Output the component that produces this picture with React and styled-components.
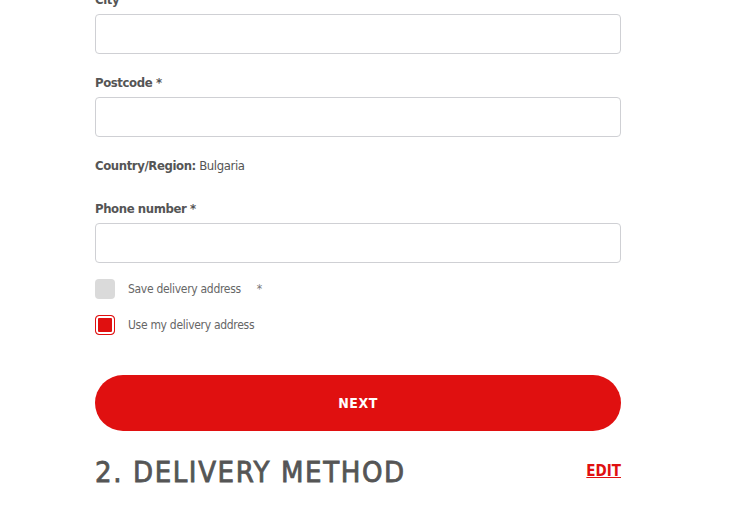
import styled, { createGlobalStyle } from 'styled-components';

const GlobalStyle = createGlobalStyle`
  body {
    margin: 0;
    background: #fff;
    font-family: "DejaVu Sans Condensed", "DejaVu Sans", sans-serif;
    font-stretch: semi-condensed;
    overflow: hidden;
  }
`;

const Page = styled.div`
  width: 526px;
  padding-left: 95px;
  margin-top: -10px;
`;

const Field = styled.div`
  margin-bottom: 19px;
`;

const Label = styled.label`
  display: block;
  font-size: 13px;
  line-height: 20px;
  font-weight: bold;
  color: #555;
  margin-bottom: 4px;
  letter-spacing: -0.4px;
`;

const Input = styled.input`
  display: block;
  box-sizing: border-box;
  width: 100%;
  height: 40px;
  border: 1px solid #cfd0d4;
  border-radius: 4px;
  background: #fff;
  outline: none;
`;

const Info = styled.div`
  font-size: 13px;
  line-height: 20px;
  color: #555;
  margin-bottom: 23px;
  letter-spacing: -0.4px;

  b {
    font-weight: bold;
  }
`;

const CheckRow = styled.label`
  display: flex;
  align-items: center;
  height: 20px;
  margin-top: ${(p) => p.$top}px;
  font-size: 12px;
  letter-spacing: -0.3px;
  color: #666;
`;

const Box = styled.span`
  box-sizing: border-box;
  width: 20px;
  height: 20px;
  border-radius: 4px;
  margin-right: 13px;
  flex-shrink: 0;
  background: ${(p) => (p.$checked ? '#e01010' : '#dadada')};
  box-shadow: ${(p) => (p.$checked ? 'inset 0 0 0 2px #fff' : 'none')};
  border: ${(p) => (p.$checked ? '1px solid #e01010' : 'none')};
`;

const Star = styled.span`
  margin-left: 16px;
  color: #777;
`;

const NextButton = styled.button`
  display: block;
  width: 100%;
  height: 56px;
  margin-top: 40px;
  border: none;
  border-radius: 28px;
  background: #e01010;
  color: #fff;
  font-family: inherit;
  font-size: 14px;
  font-weight: bold;
  letter-spacing: 0.5px;
  cursor: pointer;
`;

const SectionHead = styled.div`
  display: flex;
  align-items: center;
  justify-content: space-between;
  margin-top: 19px;
  height: 44px;
`;

const Title = styled.h2`
  margin: 0;
  font-size: 29px;
  font-weight: normal;
  -webkit-text-stroke: 0.8px #555;
  color: #555;
  letter-spacing: 1.6px;
`;

const EditLink = styled.a`
  font-size: 15px;
  color: #e01010;
  text-decoration: underline;
  font-weight: bold;
  margin-top: -2px;
`;

export default function App() {
  return (
    <>
      <GlobalStyle />
      <Page>
        <Field>
          <Label>City</Label>
          <Input type="text" />
        </Field>
        <Field>
          <Label>Postcode *</Label>
          <Input type="text" />
        </Field>
        <Info>
          <b>Country/Region:</b> Bulgaria
        </Info>
        <Field>
          <Label>Phone number *</Label>
          <Input type="tel" />
        </Field>
        <CheckRow $top={-3}>
          <Box />
          Save delivery address
          <Star>*</Star>
        </CheckRow>
        <CheckRow $top={16}>
          <Box $checked />
          Use my delivery address
        </CheckRow>
        <NextButton>NEXT</NextButton>
        <SectionHead>
          <Title>2. DELIVERY METHOD</Title>
          <EditLink href="#">EDIT</EditLink>
        </SectionHead>
      </Page>
    </>
  );
}
